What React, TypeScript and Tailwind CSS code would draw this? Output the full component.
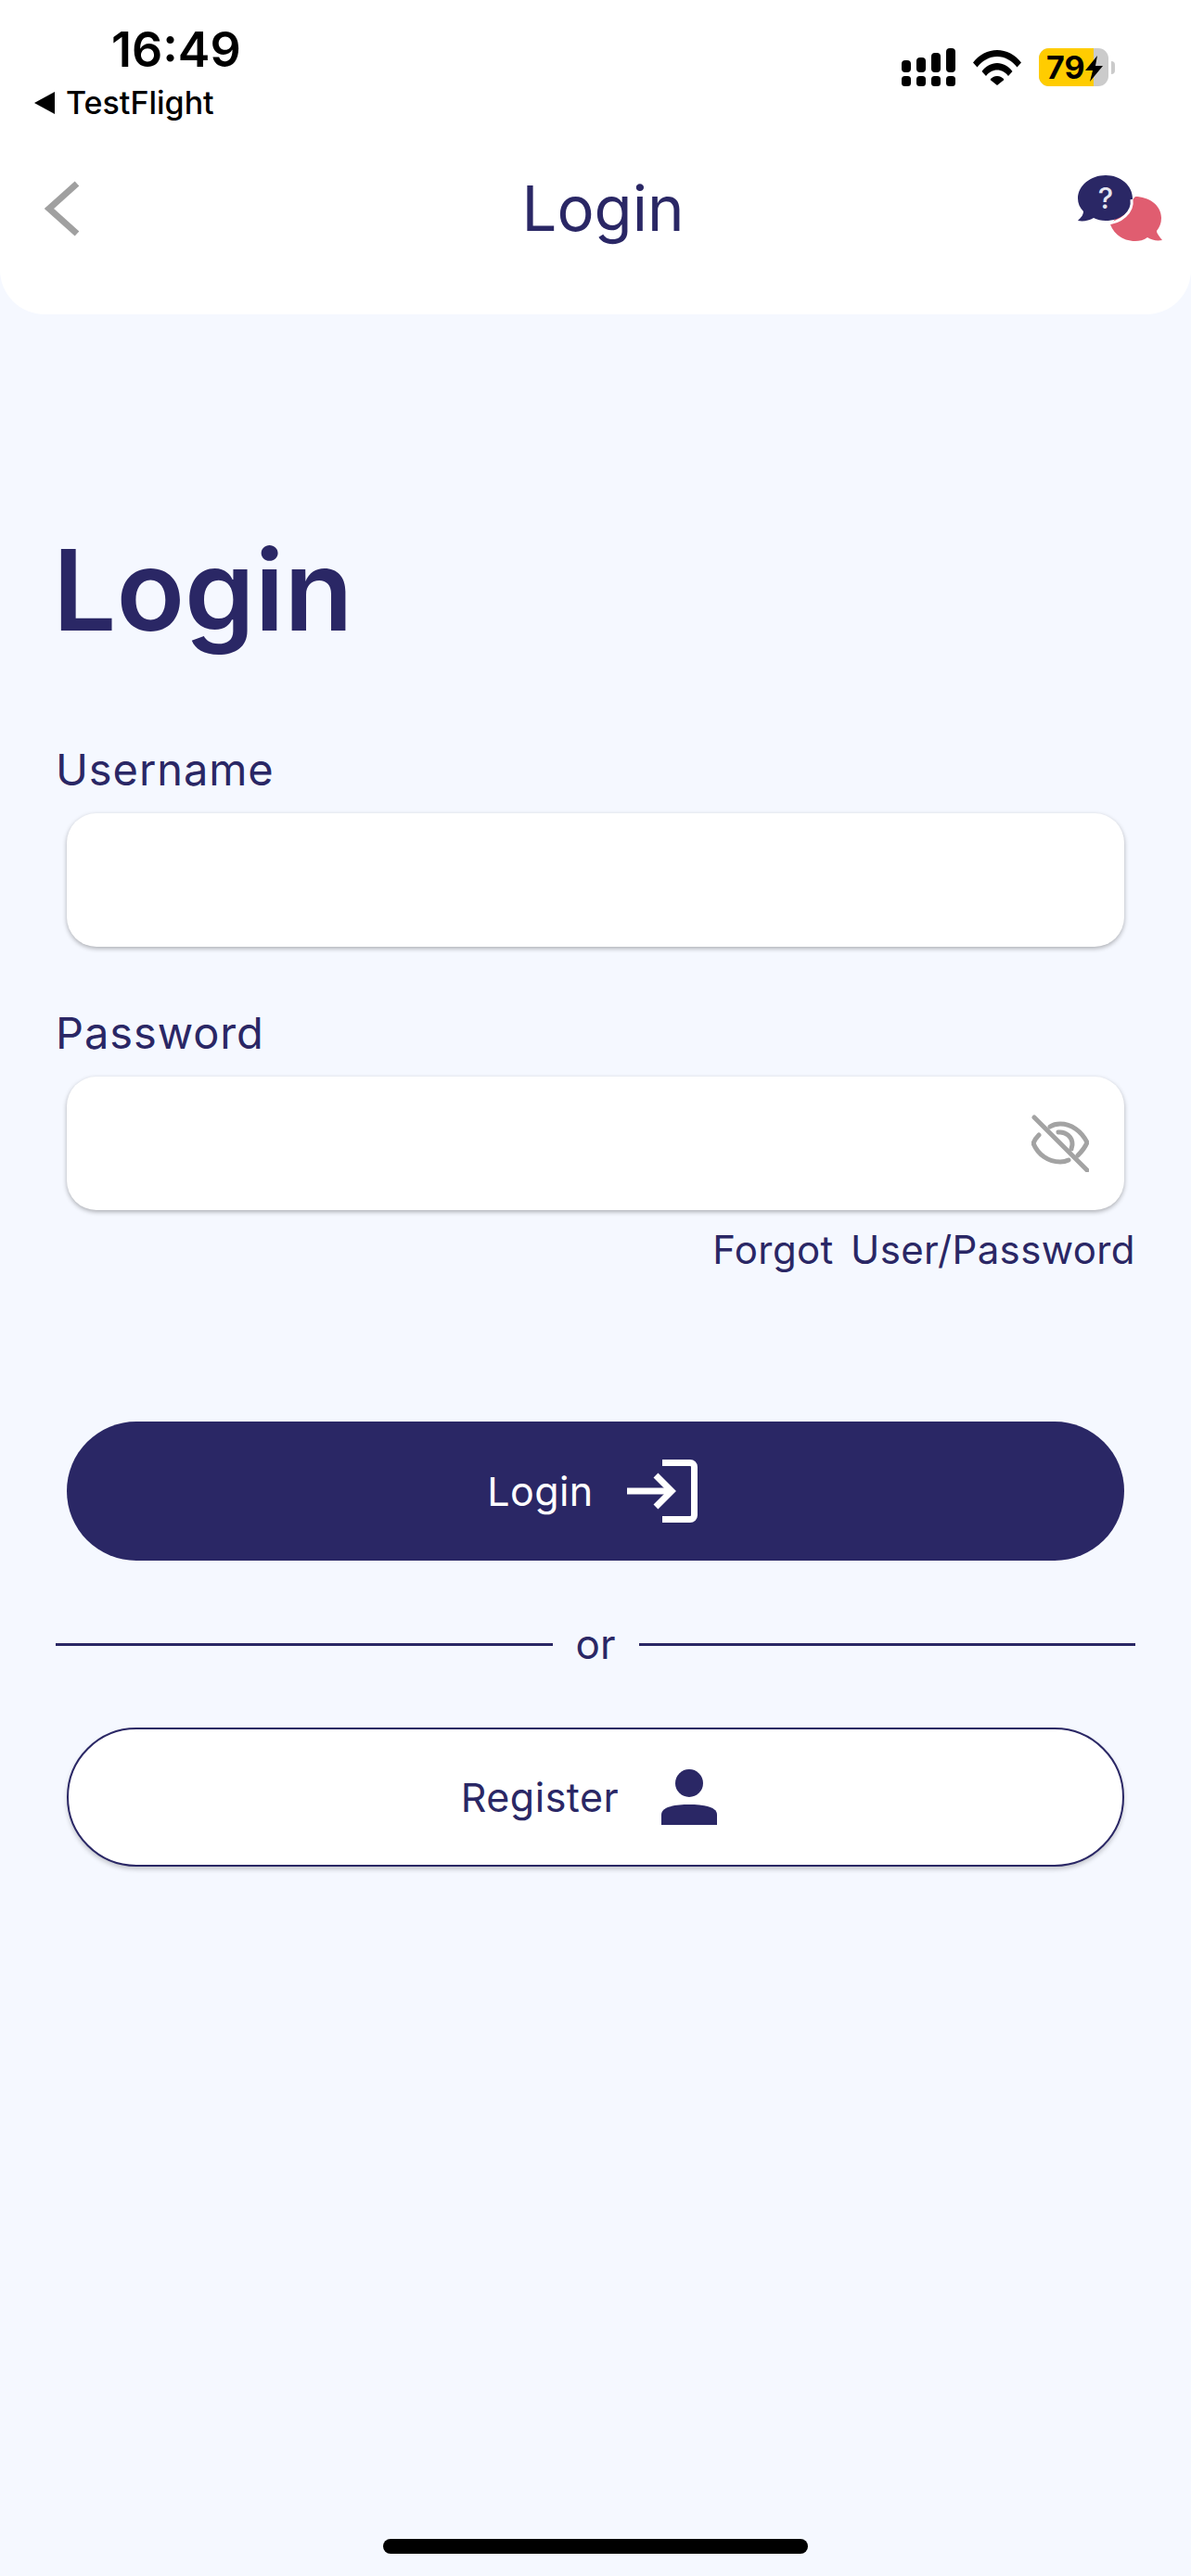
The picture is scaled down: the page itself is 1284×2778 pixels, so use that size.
import { Fragment } from 'react'

const navy = 'text-[#2a2765]'

const SignalIcon = () => (
  <svg width="58" height="41" viewBox="0 0 58 41" fill="#000">
    {[0, 16, 32, 48].map((x) => (
      <rect key={x} x={x} y="30" width="10" height="11" rx="3.5" />
    ))}
    <rect x="0" y="13" width="10" height="13" rx="4" />
    <rect x="16" y="10" width="10" height="16" rx="4" />
    <rect x="32" y="5" width="10" height="21" rx="4" />
    <rect x="48" y="0" width="10" height="26" rx="4" />
  </svg>
)

const WifiIcon = () => (
  <svg width="52" height="38" viewBox="0 0 52 38" fill="#000">
    <path d="M0 13.5C6.500 5 16 0 26 0s19.500 5 26 13.500l-4.500 5C42 11.500 34.500 7 26 7S10 11.500 4.500 18.500z" />
    <path d="M9.500 23C13.500 17.500 19.500 14 26 14s12.500 3.500 16.500 9l-4.500 5c-3-4-7.300-6.500-12-6.500S17 24 14 28z" />
    <path d="M18.500 32c1.800-2.500 4.500-4 7.500-4s5.700 1.500 7.500 4L26 38z" />
  </svg>
)

const BatteryIcon = () => (
  <div className="flex items-center gap-[3px]">
    <div className="relative flex h-[41px] w-[75px] overflow-hidden rounded-[11px] bg-[#cbcbcb]">
      <div className="h-full w-[59px] bg-[#ffcc00]" />
      <span className="absolute left-[8px] top-0 text-[34px] font-bold leading-[41px] text-black">79</span>
      <svg className="absolute left-[50px] top-[8px]" width="20" height="28" viewBox="0 0 20 28" fill="#000">
        <path d="M13 0 0 16h8L5 28 19 11h-8z" />
      </svg>
    </div>
    <div className="h-[14px] w-[4px] rounded-r-full bg-[#cbcbcb]" />
  </div>
)

const HelpIcon = () => (
  <svg width="92" height="72" viewBox="0 0 92 72">
    <path
      d="M62 23c14 0 28 9 28 23 0 6-2 10-5 14 0 3 3 6 6 10-6 1-11 0-16-3-4 3-9 4-13 4-13 0-23-7-27-18z"
      fill="#e05d70"
    />
    <path
      d="M30 0c16 0 29 11 29 25S46 49 30 49c-5 0-9-1-13-3-5 3-11 4-17 3 3-3 6-6 6-10-4-4-6-9-6-14C0 11 14 0 30 0z"
      fill="#2a2765"
    />
    <path d="M58 26c2 13-11 26-29 26" fill="none" stroke="#fff" strokeWidth="3" />
    <text x="30" y="36" textAnchor="middle" fontSize="31" fontWeight="500" fill="#e6e6f0" fontFamily="Inter, sans-serif">
      ?
    </text>
  </svg>
)

const EyeOffIcon = () => (
  <svg width="62" height="62" viewBox="0 0 62 62" fill="none" stroke="#a3a3a3" strokeWidth="5" strokeLinecap="round">
    <path d="M3 3l57 57" />
    <path d="M20 13c3-2 7-3 11-3 12 0 23 8 29 20-2 5-6 10-10 14" />
    <path d="M8 22c-3 3-5 6-6 9 5 12 16 20 29 20 4 0 7-1 9-2" />
    <path d="M29 19c8-1 15 5 15 13 0 2-1 4-1 5" />
  </svg>
)

const LoginIcon = () => (
  <svg width="76" height="68" viewBox="0 0 76 68" fill="none" stroke="#fff" strokeWidth="7">
    <path d="M38 3.500h30a4.500 4.500 0 0 1 4.500 4.500v52a4.500 4.500 0 0 1-4.500 4.500H38" />
    <path d="M0 34h48" />
    <path d="M31 17l17 17-17 17" />
  </svg>
)

const PersonIcon = () => (
  <svg width="60" height="60" viewBox="0 0 60 60" fill="#2a2765">
    <circle cx="30" cy="15" r="15" />
    <path d="M0 60V49c0-9 16-11 30-11s30 2 30 11v11z" />
  </svg>
)

const Field = ({ label, children }: { label: string; children?: React.ReactNode }) => (
  <Fragment>
    <label className={`block h-[58px] text-[47px] leading-[58px] tracking-[0.9px] ${navy}`}>{label}</label>
    <div className="mx-[12px] mt-[18px] flex h-[144px] items-center justify-end rounded-[32px] bg-white pr-[38px] shadow-[0_2px_5px_rgba(0,0,0,0.3)]">
      {children}
    </div>
  </Fragment>
)

export default function App() {
  return (
    <div className="flex h-[2778px] w-[1284px] flex-col bg-[#f5f8ff] [font-family:Inter,sans-serif]">
      <header className="h-[339px] shrink-0 rounded-b-[48px] bg-white">
        <div className="flex h-[185px] items-start justify-between">
          <div className="pt-[24px]">
            <div className="pl-[120px] text-[52px] font-semibold leading-[60px] text-black">16:49</div>
            <div className="mt-[4px] flex items-center gap-[12px] pl-[37px]">
              <div className="h-0 w-0 border-y-[12px] border-r-[22px] border-y-transparent border-r-black" />
              <span className="text-[34px] font-medium leading-[46px] text-black">TestFlight</span>
            </div>
          </div>
          <div className="flex items-center pr-[82px] pt-[52px]">
            <SignalIcon />
            <div className="ml-[19px]">
              <WifiIcon />
            </div>
            <div className="ml-[19px]">
              <BatteryIcon />
            </div>
          </div>
        </div>
        <div className="flex h-[80px] items-center pl-[48px] pr-[30px]">
          <svg width="38" height="60" viewBox="0 0 38 60" fill="none" stroke="#a0a0a0" strokeWidth="7">
            <path d="M35 3 5 30l30 27" />
          </svg>
          <h2 className={`grow pl-[52px] text-center text-[67px] leading-[80px] ${navy}`}>Login</h2>
          <HelpIcon />
        </div>
      </header>

      <main className="flex grow flex-col px-[60px] pt-[222px]">
        <h1 className={`-ml-[3px] text-[121px] font-semibold leading-[150px] ${navy}`}>Login</h1>
        <div className="mt-[90px]">
          <Field label="Username" />
        </div>
        <div className="mt-[64px]">
          <Field label="Password">
            <EyeOffIcon />
          </Field>
        </div>
        <a className={`mt-[16px] self-end text-[42px] leading-[54px] tracking-[0.4px] [word-spacing:6px] ${navy}`}>
          Forgot User/Password
        </a>

        <button className="mx-[12px] mt-[158px] flex h-[150px] items-center justify-center gap-[36px] rounded-full bg-[#2a2765] pr-[7px] text-[43px] tracking-[0.4px] text-white">
          Login
          <LoginIcon />
        </button>

        <div className="mt-[63px] flex items-center">
          <div className="h-[3px] grow bg-[#2a2765]" />
          <span className={`w-[93px] text-center text-[44px] leading-[54px] ${navy}`}>or</span>
          <div className="h-[3px] grow bg-[#2a2765]" />
        </div>

        <button
          className={`mx-[12px] mt-[63px] flex h-[150px] items-center justify-center gap-[46px] rounded-full border-2 border-[#2a2765] bg-white pr-[14px] text-[43px] tracking-[0.5px] shadow-[0_3px_5px_rgba(0,0,0,0.2)] ${navy}`}
        >
          Register
          <PersonIcon />
        </button>

        <div className="mb-[24px] mt-auto h-[16px] w-[458px] self-center rounded-full bg-black" />
      </main>
    </div>
  )
}
